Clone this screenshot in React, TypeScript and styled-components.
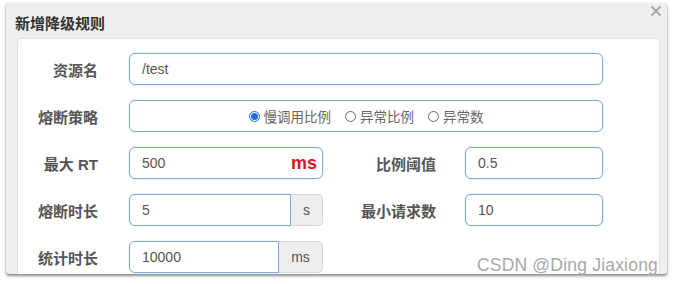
import React from "react";
import styled, { createGlobalStyle } from "styled-components";

const GlobalStyle = createGlobalStyle`
  html, body {
    margin: 0;
    padding: 0;
    background: #ffffff;
    font-family: "Liberation Sans", "Noto Sans CJK SC", sans-serif;
  }
`;

const Page = styled.div`
  width: 673px;
  height: 284px;
  padding: 3px 0 0 6px;
  box-sizing: border-box;
  position: relative;
  overflow: hidden;
`;

const Dialog = styled.div`
  width: 661px;
  height: 271px;
  background: #efefef;
  border-radius: 3px;
  box-shadow: 0 2px 3px rgba(0, 0, 0, 0.45), 0 0 1px rgba(0, 0, 0, 0.25);
  display: flex;
  flex-direction: column;
  overflow: hidden;
`;

const Header = styled.div`
  height: 35px;
  display: flex;
  align-items: center;
  justify-content: space-between;
  padding: 0 4px 0 9px;
  flex-shrink: 0;
`;

const Title = styled.div`
  font-size: 15px;
  font-weight: bold;
  color: #333;
  margin-top: 3px;
`;

const Close = styled.div`
  align-self: flex-start;
  margin-top: 1px;
  width: 14px;
  height: 14px;
  display: flex;
  align-items: center;
  justify-content: center;
`;

const Body = styled.div`
  flex: 1;
  margin: 0 7px 0 11px;
  background: #fff;
  border: 1px solid #e2e2e2;
  border-bottom: none;
  border-radius: 4px 4px 0 0;
  padding: 14px 0 0 0;
  display: flex;
  flex-direction: column;
  gap: 15px;
`;

const Row = styled.div`
  display: grid;
  grid-template-columns: 111px 194px 142px 138px;
  align-items: center;
  height: 32px;
`;

const Label = styled.div`
  font-size: 15px;
  font-weight: bold;
  color: #555;
  text-align: right;
  padding-right: 31px;
  white-space: nowrap;
`;

const SideLabel = styled(Label)`
  padding-right: 29px;
`;

const Field = styled.div<{ $span?: boolean; $center?: boolean; $flatRight?: boolean }>`
  grid-column: ${(p) => (p.$span ? "2 / 5" : "auto")};
  height: 32px;
  box-sizing: border-box;
  border: 1px solid #7fa8d6;
  border-radius: ${(p) => (p.$flatRight ? "6px 0 0 6px" : "6px")};
  box-shadow: 0 0 2px rgba(102, 160, 220, 0.35);
  display: flex;
  align-items: center;
  justify-content: ${(p) => (p.$center ? "center" : "flex-start")};
  padding: 0 12px;
  font-size: 14px;
  color: #555;
  background: #fff;
  flex: 1;
`;

const Value = styled.span`
  font-size: 14px;
  color: #555;
`;

const RedUnit = styled.span`
  margin-left: auto;
  margin-right: -7px;
  color: #e8101c;
  font-weight: bold;
  font-size: 18px;
`;

const Group = styled.div`
  display: flex;
`;

const Addon = styled.div<{ $w: number }>`
  width: ${(p) => p.$w}px;
  height: 32px;
  box-sizing: border-box;
  background: #eee;
  border: 1px solid #d6d6d6;
  border-left: none;
  border-radius: 0 5px 5px 0;
  display: flex;
  align-items: center;
  justify-content: center;
  font-size: 14px;
  color: #555;
  flex-shrink: 0;
`;

const RadioItem = styled.label`
  display: flex;
  align-items: center;
  gap: 4px;
  font-size: 13.5px;
  color: #666;
  margin: 0 7px;
`;

const Dot = styled.span<{ $on?: boolean }>`
  width: 11px;
  height: 11px;
  border-radius: 50%;
  box-sizing: border-box;
  border: ${(p) => (p.$on ? "1px solid #1a6fe0" : "1px solid #666")};
  display: flex;
  align-items: center;
  justify-content: center;
  &::after {
    content: "";
    width: 7px;
    height: 7px;
    border-radius: 50%;
    background: ${(p) => (p.$on ? "#1a6fe0" : "transparent")};
  }
`;

const Watermark = styled.div`
  position: absolute;
  right: 15px;
  bottom: 8px;
  font-size: 17.5px;
  color: #a8a8a8;
  letter-spacing: 0.2px;
`;

const strategies = [
  { text: "慢调用比例", on: true },
  { text: "异常比例", on: false },
  { text: "异常数", on: false },
];

export default function App() {
  return (
    <Page>
      <GlobalStyle />
      <Dialog>
        <Header>
          <Title>新增降级规则</Title>
          <Close>
            <svg width="12" height="12" viewBox="0 0 12 12">
              <path d="M1.5 1.5 L10.5 10.5 M10.5 1.5 L1.5 10.5" stroke="#a9a9a9" strokeWidth="2.2" />
            </svg>
          </Close>
        </Header>
        <Body>
          <Row>
            <Label>资源名</Label>
            <Field $span>
              <Value>/test</Value>
            </Field>
          </Row>
          <Row>
            <Label>熔断策略</Label>
            <Field $span $center>
              {strategies.map((s) => (
                <RadioItem key={s.text}>
                  <Dot $on={s.on} />
                  {s.text}
                </RadioItem>
              ))}
            </Field>
          </Row>
          <Row>
            <Label>最大 RT</Label>
            <Field>
              <Value>500</Value>
              <RedUnit>ms</RedUnit>
            </Field>
            <SideLabel>比例阈值</SideLabel>
            <Field>
              <Value>0.5</Value>
            </Field>
          </Row>
          <Row>
            <Label>熔断时长</Label>
            <Group>
              <Field $flatRight>
                <Value>5</Value>
              </Field>
              <Addon $w={32}>s</Addon>
            </Group>
            <SideLabel>最小请求数</SideLabel>
            <Field>
              <Value>10</Value>
            </Field>
          </Row>
          <Row>
            <Label>统计时长</Label>
            <Group>
              <Field $flatRight>
                <Value>10000</Value>
              </Field>
              <Addon $w={44}>ms</Addon>
            </Group>
          </Row>
        </Body>
      </Dialog>
      <Watermark>CSDN @Ding Jiaxiong</Watermark>
    </Page>
  );
}
